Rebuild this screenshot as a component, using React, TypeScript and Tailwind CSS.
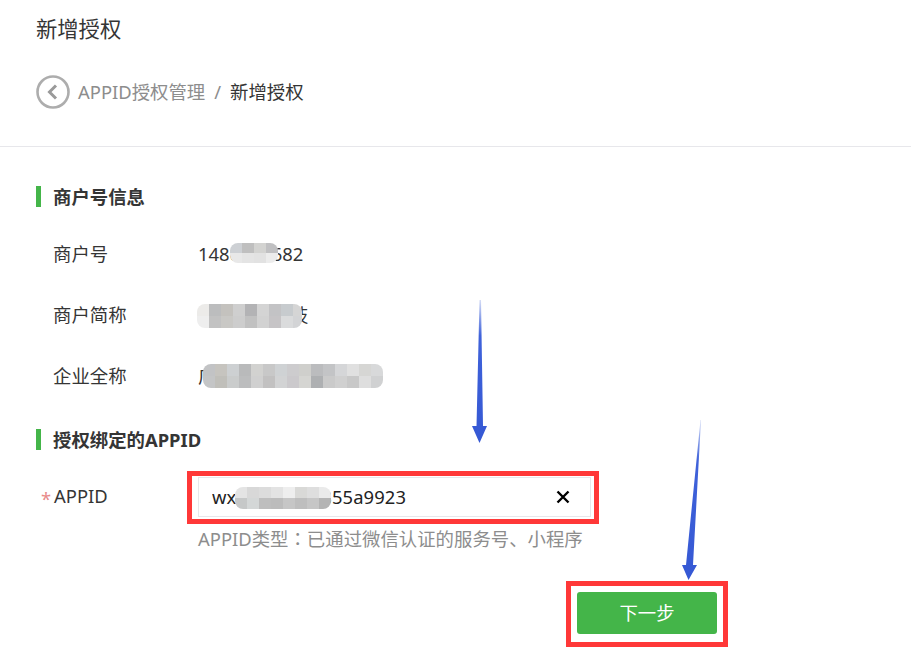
import React from "react";

const Mosaic = ({ rows, cell, cellH, className }: { rows: string[][]; cell: number; cellH: number; className: string }) => (
  <div className={`absolute overflow-hidden rounded-[8px] ${className}`}>
    {rows.map((row, i) => (
      <div key={i} className="flex">
        {row.map((c, j) => (
          <div key={j} className="shrink-0" style={{ width: cell, height: cellH, backgroundColor: c }} />
        ))}
      </div>
    ))}
  </div>
);

const SectionTitle = ({ children, className }: { children: React.ReactNode; className: string }) => (
  <div className={`flex h-[21px] items-center border-l-[5px] border-[#44b549] pl-[12px] pt-[1px] text-[18.4px] font-bold text-[#353535] ${className}`}>
    {children}
  </div>
);

const InfoRow = ({ label, children }: { label: string; children: React.ReactNode }) => (
  <div className="flex h-[61px] items-center pb-[2px] pl-[17px] text-[18.4px] text-[#353535]">
    <div className="w-[145px] shrink-0">{label}</div>
    <div className="relative flex-1 whitespace-nowrap">{children}</div>
  </div>
);

export default function App() {
  return (
    <div className="relative h-[665px] w-[911px] overflow-hidden bg-white font-['Noto_Sans','Noto_Sans_CJK_SC',sans-serif]">
      <div className="border-b border-[#e7e7eb] px-9 pb-[37px] pt-[14px]">
        <h1 className="text-[21.3px] leading-[30px] text-[#353535]">新增授权</h1>
        <div className="mt-[31px] flex h-[34px] items-center text-[18.4px]">
          <svg width="34" height="34" viewBox="0 0 34 34" fill="none" className="shrink-0">
            <circle cx="17" cy="17" r="15.5" stroke="#adadad" strokeWidth="2.6" />
            <path d="M20 10.5 L13.5 17 L20 23.5" stroke="#9a9a9a" strokeWidth="3" />
          </svg>
          <span className="ml-2 text-[#8d8d8d]">APPID授权管理</span>
          <span className="ml-[9px] text-[#8d8d8d]">/</span>
          <span className="ml-[9px] text-[#353535]">新增授权</span>
        </div>
      </div>

      <div className="px-9">
        <SectionTitle className="mt-[39px]">商户号信息</SectionTitle>
        <div className="mt-[17px]">
          <InfoRow label="商户号">
            1480000682
            <Mosaic
              className="top-[3px] left-[32px]"
              cell={12}
              cellH={10}
              rows={[
                ["#cdd0d4", "#bfbfbf", "#d3d3d1", "#c0c0c2"],
                ["#e8e8e8", "#e4e4e4", "#e2e2e2", "#ececec"],
              ]}
            />
          </InfoRow>
          <InfoRow label="商户简称">
            某某某某科技
            <Mosaic
              className="top-[3px] -left-[1px] w-[105px]"
              cell={12}
              cellH={12}
              rows={[
                ["#ecebe9", "#bcbdbe", "#c4c2be", "#cfcfcf", "#b3b3b5", "#d4d4d4", "#c3c3c5", "#c7cbce", "#d5d5d5"],
                ["#eeeeee", "#c2c2c2", "#c9c8c5", "#cdcdcd", "#c1c1c1", "#d2d2d2", "#c6c4c6", "#dadbdc", "#d3d4d6"],
              ]}
            />
          </InfoRow>
          <InfoRow label="企业全称">
            广
            <Mosaic
              className="top-[2px] left-[5px]"
              cell={12}
              cellH={12}
              rows={[
                ["#c2c3c5", "#c6c4bf", "#cdd0d2", "#b9babb", "#d2d2d0", "#c8c8c8", "#cfd2d4", "#cdccce", "#cfcfcc", "#bbbcbe", "#c3c4c6", "#d5d6d8", "#e0e0e0", "#d6d6d4", "#d8d9da"],
                ["#c4c5c6", "#c0bfba", "#cacccc", "#bcbdbe", "#d0d0d0", "#c2c1c1", "#d2d3d4", "#cbc9cc", "#d5d5d2", "#aeb0b2", "#cacaca", "#d0d0d0", "#c8c8c8", "#dedede", "#d0d1d2"],
              ]}
            />
          </InfoRow>
        </div>
        <SectionTitle className="mt-[22px]">授权绑定的APPID</SectionTitle>
      </div>

      <div className="ml-[41px] mt-[21px] flex h-[53px] text-[18.4px]">
        <div className="flex w-[146px] shrink-0 pt-[12px] leading-[26px] text-[#353535]">
          <span className="w-[13px] pt-[3px] text-[#e88a8a]">*</span>
          <span>APPID</span>
        </div>
        <div className="h-[53px] w-[412px] border-[5px] border-[#ff3838] bg-white pl-[6px] pr-[3px] pt-[1px]">
          <div className="relative flex h-[40px] items-center border border-[#e7e7eb] pl-[13px] pr-[20px]">
            <input
              readOnly
              value="wx00000000855a9923"
              className="min-w-0 flex-1 bg-transparent text-[18.4px] tracking-[0.1px] text-[#222222] outline-none"
            />
            <svg width="14" height="14" viewBox="0 0 14 14" fill="none" className="shrink-0">
              <path d="M1.5 1.5 L12.5 12.5 M12.5 1.5 L1.5 12.5" stroke="#000000" strokeWidth="2.4" />
            </svg>
            <Mosaic
              className="left-[36px] top-[9px]"
              cell={12}
              cellH={11}
              rows={[
                ["#e4e4e4", "#d8d8d8", "#dcdcdc", "#e3e3e3", "#eeeeee", "#d9d9d7", "#dedede", "#eaeaea"],
                ["#c6c8c8", "#d4d7d7", "#bebebe", "#bcbcbc", "#c6c6c6", "#bebebe", "#c6c6c6", "#b4b4b4"],
              ]}
            />
          </div>
        </div>
      </div>
      <p className="ml-[198px] mt-[2px] text-[18.4px] leading-[24px] text-[#8d8d8d]">
        APPID类型<span className="font-['Noto_Sans_CJK_TC']">：</span>已通过微信认证的服务号、小程序
      </p>

      <div className="ml-[566px] mt-[30px] h-[66px] w-[162px] border-[5px] border-[#ff3838] pl-[6px] pt-[6px]">
        <button className="h-[42px] w-[140px] rounded-[3px] bg-[#44b549] text-[18.4px] text-white">下一步</button>
      </div>

      <svg width="911" height="665" viewBox="0 0 911 665" className="pointer-events-none absolute left-0 top-0">
        <defs>
          <linearGradient id="arrowA" x1="0" y1="300" x2="0" y2="443" gradientUnits="userSpaceOnUse">
            <stop offset="0" stopColor="#d5ddf6" />
            <stop offset="0.25" stopColor="#3f62da" />
            <stop offset="1" stopColor="#3558d4" />
          </linearGradient>
          <linearGradient id="arrowB" x1="0" y1="420" x2="0" y2="580" gradientUnits="userSpaceOnUse">
            <stop offset="0" stopColor="#d5ddf6" />
            <stop offset="0.25" stopColor="#3f62da" />
            <stop offset="1" stopColor="#3558d4" />
          </linearGradient>
        </defs>
        <polygon points="479.5,300 481,300 483,426 487,426 479.5,443 472,426 476.5,426" fill="url(#arrowA)" />
        <polygon points="700.5,420 701,420 693,565 697,565 688.5,580 682,565 686,565" fill="url(#arrowB)" />
      </svg>
    </div>
  );
}
